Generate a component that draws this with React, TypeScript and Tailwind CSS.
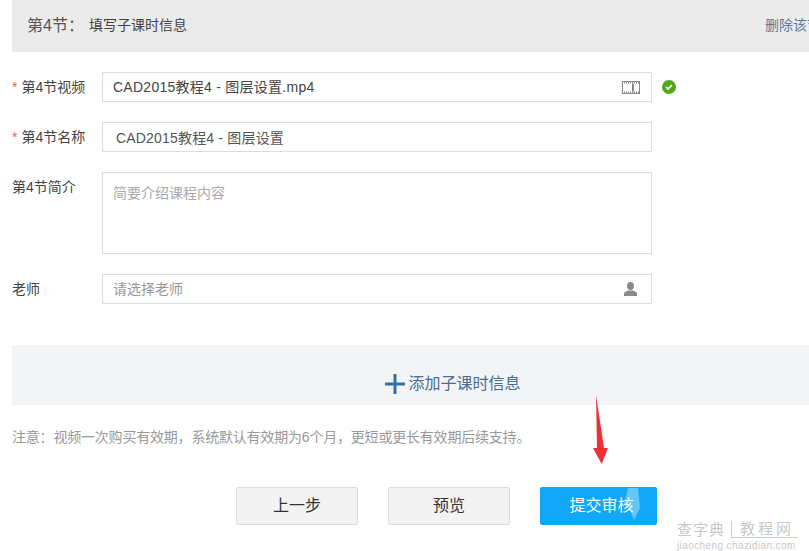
const cjk = "font-['Liberation_Sans','Noto_Sans_CJK_SC',sans-serif]"

function FilmIcon() {
  return (
    <svg width="18" height="13" viewBox="0 0 18 13" className="text-[#888]">
      <rect x="0.5" y="0.5" width="17" height="12" fill="none" stroke="currentColor" />
      <path d="M0 1.500h18M0 11.500h18" stroke="currentColor" strokeWidth="2" strokeDasharray="1 1" />
      <rect x="10" y="2.500" width="2" height="8" fill="currentColor" />
    </svg>
  )
}

function UserIcon() {
  return (
    <svg width="13" height="14" viewBox="0 0 13 14" fill="#8a8a8a">
      <ellipse cx="6.500" cy="4" rx="3.500" ry="4" />
      <path d="M0 14v-2.500c0-1.500 2.500-2.500 4.500-3h4c2 .5 4.500 1.500 4.500 3V14z" />
    </svg>
  )
}

function Label({ text, required, className }: { text: string; required?: boolean; className?: string }) {
  return (
    <div className={`w-[90px] shrink-0 text-[14px] text-[#444] ${className ?? ""}`}>
      {required && <span className="mr-[4px] text-[#e8663d]">*</span>}
      {text}
    </div>
  )
}

export default function App() {
  return (
    <div className={`relative h-[551px] w-[809px] overflow-hidden bg-white pl-3 ${cjk}`}>
      {/* section header */}
      <div className="flex h-[52px] items-center justify-between bg-[#ebebeb] pb-px pl-[15px] -mr-[30px]">
        <div className="flex items-center">
          <span className="w-[62px] text-[16px] text-[#555]">第4节：</span>
          <span className="text-[14px] text-[#444]">填写子课时信息</span>
        </div>
        <a className="w-[74px] whitespace-nowrap text-[14px] text-[#5a7a9a]">删除该节</a>
      </div>

      <div className="mt-5 flex h-[30px] items-center">
        <Label text="第4节视频" required />
        <div className="flex h-full w-[550px] items-center justify-between border border-[#dcdcdc] pl-[10px] pr-[11px] text-[14px] tracking-[0.26px] text-[#444]">
          <span>CAD2015教程4 - 图层设置.mp4</span>
          <FilmIcon />
        </div>
        <div className="ml-[10px] flex h-[14px] w-[14px] items-center justify-center rounded-full bg-[#55a81e]">
          <svg width="8" height="8" viewBox="0 0 8 8" fill="none" stroke="white" strokeWidth="1.600">
            <path d="M1 4l2 2 4-4" />
          </svg>
        </div>
      </div>

      <div className="mt-5 flex h-[30px] items-center">
        <Label text="第4节名称" required />
        <div className="flex h-full w-[550px] items-center border border-[#dcdcdc] pl-[13px] pt-[2px] text-[14px] tracking-[0.18px] text-[#555]">
          CAD2015教程4 - 图层设置
        </div>
      </div>

      <div className="mt-5 flex h-[82px]">
        <Label text="第4节简介" className="pt-[5px]" />
        <div className="h-full w-[550px] border border-[#dcdcdc] pl-[10px] pt-[10px] text-[14px] text-[#aaa]">
          简要介绍课程内容
        </div>
      </div>

      <div className="mt-5 flex h-[30px] items-center">
        <Label text="老师" />
        <div className="flex h-full w-[550px] items-center justify-between border border-[#dcdcdc] pl-[10px] pr-[14px] text-[14px] text-[#999]">
          <span className="pt-px">请选择老师</span>
          <UserIcon />
        </div>
      </div>

      {/* add lesson */}
      <div className="mt-[41px] flex h-[60px] items-end justify-center bg-[#f3f4f6] pb-[9px] pl-[85px] text-[16px] text-[#4a6c92]">
        <div className="flex items-center gap-[3px]">
          <svg width="20" height="20" viewBox="0 0 20 20" fill="#336f9f">
            <rect x="8.500" y="0" width="3" height="20" />
            <rect x="0" y="8.500" width="20" height="3" />
          </svg>
          <span>添加子课时信息</span>
        </div>
      </div>

      <p className="mt-[23px] text-[14px] leading-[18px] tracking-[-0.2px] text-[#999]">
        注意：视频一次购买有效期，系统默认有效期为6个月，更短或更长有效期后续支持。
      </p>

      <div className="mt-[41px] flex pl-[224px]">
        <button className="h-[38px] w-[122px] rounded-[2px] border border-[#dcdcdc] bg-[#f3f3f3] text-[16px] text-[#333]">上一步</button>
        <button className="ml-[30px] h-[38px] w-[122px] rounded-[2px] border border-[#dcdcdc] bg-[#f3f3f3] text-[16px] text-[#333]">预览</button>
        <button className="ml-[30px] h-[38px] w-[117px] rounded-[2px] bg-[#10a8f6] pl-[6px] text-[16px] text-white">提交审核</button>
      </div>

      {/* smudge left over the submit button */}
      <svg className="absolute left-[620px] top-[484px]" width="44" height="44" viewBox="0 0 44 44">
        <path d="M8 4h10l2 20-6 12-4-10-6-6z" fill="white" fillOpacity="0.35" />
        <path d="M37 3l1 34 3-2-1-30z" fill="white" fillOpacity="0.6" />
      </svg>

      {/* red annotation arrow */}
      <svg className="absolute left-[590px] top-[393px]" width="20" height="74" viewBox="0 0 20 74" fill="#f03035">
        <path d="M6 2L14 55 18 55 11.700 71 3 55 7 55z" />
      </svg>

      {/* watermark */}
      <div className="absolute left-[677px] top-[521px] leading-none text-[#c8c8c8]">
        <div className="flex items-center whitespace-nowrap text-[15px]">
          <span className="tracking-[1px]">查字典</span>
          <span className="ml-[6px] border-b border-l border-[#ccc] pb-px pl-[8px] pr-[4px] text-[15px] tracking-[3px]">教程网</span>
        </div>
        <div className="mt-[3px] text-[10px] tracking-[0.400px]">jiaocheng.chazidian.com</div>
      </div>
    </div>
  )
}
